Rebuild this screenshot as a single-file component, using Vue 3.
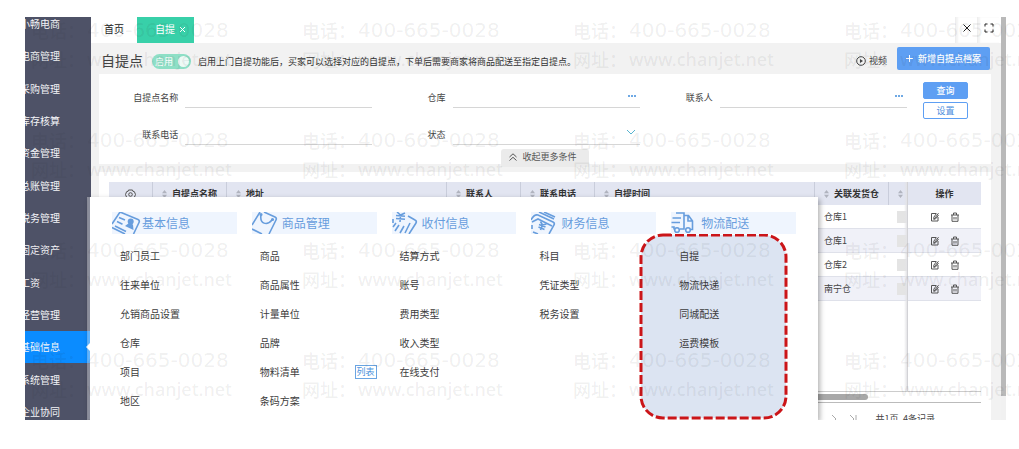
<script setup>
import { ref } from 'vue'

const modules = [
  '小畅电商', '电商管理', '采购管理', '库存核算', '资金管理', '总账管理', '税务管理',
  '固定资产', '工资', '经营管理', '基础信息', '系统管理', '企业协同',
]
const activeModule = ref('基础信息')
const enabled = ref(true)

const columns = ['自提点名称', '地址', '联系人', '联系电话', '自提时间', '关联发货仓', '']
const rows = ['仓库1', '仓库1', '仓库2', '南宁仓']

const groups = [
  { id: 'base', title: '基本信息', items: ['部门员工', '往来单位', '允销商品设置', '仓库', '项目', '地区'] },
  { id: 'goods', title: '商品管理', items: ['商品', '商品属性', '计量单位', '品牌', '物料清单', '条码方案'] },
  { id: 'pay', title: '收付信息', items: ['结算方式', '账号', '费用类型', '收入类型', '在线支付'] },
  { id: 'finance', title: '财务信息', items: ['科目', '凭证类型', '税务设置'] },
  { id: 'ship', title: '物流配送', items: ['自提', '物流快递', '同城配送', '运费模板'] },
]
</script>

<template>
  <div class="page">
    <div class="frame">
      <nav class="sidebar">
        <ul>
          <li v-for="m in modules" :key="m" :class="{ active: m === activeModule }">
            <a href="#" @click.prevent="activeModule = m">{{ m }}</a>
          </li>
        </ul>
      </nav>

      <main class="main">
        <div class="tabs">
          <button class="tab">首页</button>
          <button class="tab current">自提
            <svg width="7" height="7" viewBox="0 0 7 7"><path d="M1 1l5 5M6 1L1 6" /></svg>
          </button>
          <div class="window-tools">
            <button aria-label="关闭">
              <svg width="10" height="10" viewBox="0 0 10 10"><path d="M1.500 1.500l7 7M8.500 1.500l-7 7" /></svg>
            </button>
            <button aria-label="全屏">
              <svg width="10" height="10" viewBox="0 0 10 10"><path d="M1 3.500V1h2.500M6.500 1H9v2.500M9 6.500V9H6.500M3.500 9H1V6.500" /></svg>
            </button>
          </div>
        </div>

        <div class="body">
          <div class="content">
            <header class="head">
              <h1>自提点</h1>
              <label class="switch">
                <input v-model="enabled" type="checkbox" aria-label="启用自提点" />
                <span>启用</span><i></i>
              </label>
              <p>启用上门自提功能后，买家可以选择对应的自提点，下单后需要商家将商品配送至指定自提点。</p>
              <button class="video">
                <svg width="10" height="10" viewBox="0 0 10 10"><circle cx="5" cy="5" r="4.300" /><path d="M4 3l3 2-3 2z" /></svg>
                视频
              </button>
              <button class="add">
                <svg width="7" height="7" viewBox="0 0 7 7"><path d="M3.500 0v7M0 3.500h7" /></svg>
                新增自提点档案
              </button>
            </header>

            <section class="filter">
              <form class="fields" @submit.prevent>
                <div class="field">
                  <label for="f-name">自提点名称</label>
                  <div class="control"><input id="f-name" type="text" /></div>
                </div>
                <div class="field">
                  <label for="f-store">仓库</label>
                  <div class="control">
                    <input id="f-store" type="text" />
                    <button type="button" class="more" aria-label="选择仓库"><i></i><i></i><i></i></button>
                  </div>
                </div>
                <div class="field">
                  <label for="f-person">联系人</label>
                  <div class="control">
                    <input id="f-person" type="text" />
                    <button type="button" class="more" aria-label="选择联系人"><i></i><i></i><i></i></button>
                  </div>
                </div>
                <div class="field">
                  <label for="f-phone">联系电话</label>
                  <div class="control"><input id="f-phone" type="text" /></div>
                </div>
                <div class="field">
                  <label for="f-state">状态</label>
                  <div class="control">
                    <select id="f-state"><option value=""></option></select>
                    <svg width="10" height="6" viewBox="0 0 10 6"><path d="M1 1l4 4 4-4" /></svg>
                  </div>
                </div>
              </form>
              <div class="query">
                <button class="solid">查询</button>
                <button>设置</button>
              </div>
              <button class="collapse">
                <svg width="8" height="8" viewBox="0 0 8 8"><path d="M.5 4L4 .8 7.500 4M.5 7.500L4 4.300l3.500 3.200" /></svg>
                收起更多条件
              </button>
            </section>

            <section class="panel">
              <div class="grid">
                <table>
                  <colgroup>
                    <col class="c-set" /><col class="c-mid" /><col /><col class="c-mid" /><col class="c-mid" /><col />
                    <col class="c-mid" /><col class="c-thin" /><col class="c-act" />
                  </colgroup>
                  <thead>
                    <tr>
                      <th class="set">
                        <svg width="11" height="11" viewBox="0 0 11 11">
                          <path d="M3.500 1h4l.4 1.300 1.500.4L10.500 5.500 9.400 8.300l-1.500.4L7.500 10h-4l-.4-1.300-1.500-.4L.5 5.500l1.100-2.800 1.500-.4z" />
                          <circle cx="5.500" cy="5.500" r="1.800" />
                        </svg>
                      </th>
                      <th v-for="c in columns" :key="c">
                        <svg class="sort" width="5" height="8" viewBox="0 0 5 8"><path d="M0 3.200L2.500 0 5 3.200zM0 4.800L2.500 8 5 4.800z" /></svg>{{ c }}
                      </th>
                      <th class="act">操作</th>
                    </tr>
                  </thead>
                  <tbody>
                    <tr v-for="(r, i) in rows" :key="i">
                      <td></td><td></td><td></td><td></td><td></td><td></td>
                      <td class="store">{{ r }}</td>
                      <td class="thin"><span></span></td>
                      <td class="act">
                        <button aria-label="编辑">
                          <svg width="10" height="10" viewBox="0 0 10 10"><path d="M6 1.500H1.500v7.500h6.500V5M4 7.300L8.500 1.200M3.800 5.200L6.500 1.500M3.800 5.200V7.300l2-.6L8.500 3" /></svg>
                        </button>
                        <button aria-label="删除">
                          <svg width="10" height="10" viewBox="0 0 10 10"><path d="M1 3h8M3.500 3V1h3v2M2 3v6.300h6V3M4 5v2.500M6 5v2.500" /></svg>
                        </button>
                      </td>
                    </tr>
                  </tbody>
                </table>
              </div>
              <div class="hscroll"><span></span></div>
              <footer class="pager">
                <svg width="6" height="10" viewBox="0 0 6 10"><path d="M1 1l4 4-4 4" /></svg>
                <svg width="8" height="10" viewBox="0 0 8 10"><path d="M1 1l4 4-4 4M7 1v8" /></svg>
                <span>共1页, 4条记录</span>
              </footer>
            </section>
          </div>
        </div>
      </main>
      <div class="vscroll"><span></span></div>

      <div class="menu">
        <svg class="highlight"><rect x="2" y="2" rx="22" ry="22" /></svg>
        <section v-for="g in groups" :key="g.id" class="group">
          <h2>
            <svg width="29" height="22" viewBox="0 0 29 22">
              <g v-if="g.id === 'base'">
                <path d="M8 0L26 7.500q2 1 1 3L21.500 22M8 0L0 12M0 15.500L13 22" />
                <path d="M7 5.500l6 2.500M5 9.500l5.500 2.700M3 14l11 5.500" />
                <circle class="fill" cx="18.700" cy="9.500" r="3" />
                <path class="fill" d="M17 11l4 1.500.5 5.500-8.500-4z" />
              </g>
              <g v-else-if="g.id === 'goods'">
                <path d="M0 13L8 0M12 0l11 5q2 1 1 3L17 22M0 17l10 5M9 3c-1.500 9 6 11 11 5" />
                <circle cx="9" cy="2.500" r=".8" /><circle cx="20.500" cy="7.500" r=".8" />
              </g>
              <g v-else-if="g.id === 'pay'">
                <path d="M5 0l3.500 3L13 1M4 3.500l9 .8M4 6.500l9 .8M8.500 3L8 10" />
                <path d="M1 7v4M16 4l7 4q2 1 1 3L17 22M1 15l3-4M3 19l4-6M8 21l4-7M13 21l5-10" />
              </g>
              <g v-else-if="g.id === 'finance'">
                <path d="M0 8Q3 2 7 3l15 7q2 1 1 3L18 22M8 0l15 7M13 0l11 5M1 10l6-3 14 7M1 13v4M2 20l5 2" />
                <path d="M9.500 9.500l2 3.500 4-1M8 12.500l6.500 2.500M7.500 15l6 2.500M11.500 13l-2 5" />
              </g>
              <g v-else>
                <path d="M5 1h8v16H9M1.500 6H10M.5 10.500H9M.5 15H3v2.500M13 3.500h4.500l4 5.500v8.500H19.500M17 4v5h4" />
                <circle cx="6" cy="18" r="2.300" /><circle cx="17" cy="18" r="2.300" />
              </g>
            </svg>
            {{ g.title }}
          </h2>
          <ul>
            <li v-for="it in g.items" :key="it">
              <a href="#">{{ it }}</a>
              <a v-if="it === '物料清单'" href="#" class="tag">列表</a>
            </li>
          </ul>
        </section>
      </div>
    </div>

    <div class="watermark" aria-hidden="true">
      <div v-for="n in 16" :key="n" class="mark">
        <span>电话：</span><b>400-665-0028</b>
        <span>网址：</span><em>www.chanjet.net</em>
      </div>
    </div>
  </div>
</template>

<style>
body { background: #fff; }
</style>

<style scoped>
* { box-sizing: border-box; }
.page {
  position: relative;
  height: 100vh;
  padding: 17px 13px 29px 25px;
  overflow: hidden;
  font: 9px/12px "Noto Sans CJK SC", sans-serif;
  color: #444;
}
ul, h1, h2, p { margin: 0; padding: 0; list-style: none; font-weight: 400; }
a { color: inherit; text-decoration: none; }
button, input, select { font: inherit; color: inherit; border: 0; padding: 0; margin: 0; background: none; }
svg { fill: none; stroke: currentColor; flex: none; }
.frame { position: relative; display: flex; height: 100%; overflow: hidden; }

.sidebar { flex: none; width: 66px; overflow: hidden; background: #4e5267; }
.sidebar ul { display: grid; grid-auto-rows: 1fr; height: calc(100% + 17px); margin-top: -9px; }
.sidebar li { position: relative; display: flex; align-items: center; font-size: 10px; color: #f4f5f8; }
.sidebar a { margin-left: -5px; white-space: nowrap; }
.sidebar .active { background: #0b8cff; }
.sidebar .active::after {
  content: ""; position: absolute; right: 1px; top: 50%; margin-top: -4px;
  border: 4px solid transparent; border-right-color: #fff; border-left: 0;
}

.main { flex: 1; min-width: 0; display: flex; flex-direction: column; background: #f2f2f2; }
.tabs { flex: none; display: flex; height: 26px; background: #fff; font-size: 10px; color: #222; }
.tab { width: 46px; padding-bottom: 2px; }
.tab.current { display: flex; align-items: center; justify-content: flex-end; gap: 4px; width: 57px; padding-right: 8px; background: #38d0a9; color: #fff; }
.window-tools { display: flex; margin-left: auto; padding-right: 2px; }
.window-tools button { display: flex; align-items: center; justify-content: center; width: 22px; padding-bottom: 4px; border-left: 1px solid #eee; box-shadow: inset 2px 0 2px #f3f3f3; }

.body { flex: 1; min-height: 0; padding: 0 10px 0 8px; }
.content { display: flex; flex-direction: column; height: 100%; }
.head { flex: none; display: flex; align-items: center; height: 31px; padding: 0 1px 0 2px; }
.head h1 { font-size: 14px; line-height: 20px; color: #444; padding-top: 2px; }
.switch { position: relative; display: flex; align-items: center; justify-content: space-between; width: 39px; height: 15px; margin: 6px 7px 0 9px; padding: 0 2px 0 3px; border-radius: 8px; background: #8edfc6; color: #fff; }
.switch input { position: absolute; inset: 0; margin: 0; opacity: 0; }
.switch i { width: 11px; height: 11px; border-radius: 50%; background: #eefaf6; }
.head p { margin-top: 6px; white-space: nowrap; color: #333; }
.video { display: flex; align-items: center; gap: 3px; margin: 4px 10px 0 auto; }
.video path { fill: currentColor; stroke: none; }
.add { display: flex; align-items: center; justify-content: center; gap: 5px; width: 93px; height: 23px; border-radius: 2px; background: #5e9ff3; color: #fff; font-weight: 500; }

.filter { position: relative; flex: none; display: flex; padding: 8px 23px 19px 6px; background: #fff; }
.fields { flex: 1; display: grid; grid-template-columns: repeat(3, 1fr); gap: 15px 0; margin-top: 4px; }
.field { display: flex; justify-content: flex-end; gap: 7px; height: 22px; }
.field label { align-self: center; white-space: nowrap; color: #444; padding-top: 2px; }
.control { display: flex; align-items: center; width: 70%; border-bottom: 1px solid #d6d6d6; }
.control input, .control select { flex: 1; min-width: 0; height: 18px; appearance: none; outline: 0; }
.more { display: flex; gap: 1px; margin: 0 4px 2px 0; }
.more i { width: 2px; height: 2px; background: #6fa9e4; }
.control svg { margin: 0 4px 4px 0; color: #58b4d0; }
.query { display: flex; flex-direction: column; gap: 3px; width: 45px; margin-left: 16px; }
.query button { height: 17px; border: 1px solid #5e9ff3; border-radius: 2px; color: #4c8ddd; line-height: 14px; }
.query .solid { background: #5e9ff3; color: #fff; font-weight: 500; }
.collapse { position: absolute; left: 50%; top: 75px; display: flex; align-items: center; justify-content: center; gap: 5px; width: 88px; height: 18px; margin-left: -44px; padding: 0 4px 2px 0; border-radius: 3px 3px 0 0; background: #ebebeb; color: #555; }

.panel { flex: 1; min-height: 0; display: flex; flex-direction: column; margin-top: 8px; padding: 10px 10px 0; background: #fff; }
.grid { position: relative; flex: 1; min-height: 0; border-bottom: 1px solid #ccc; }
.grid::after { content: ""; position: absolute; top: 0; bottom: 0; right: 73px; width: 3px; border-right: 1px solid #d2d2d6; background: linear-gradient(to right, transparent, #e3e3e6); }
table { width: 100%; border-collapse: separate; border-spacing: 0; table-layout: fixed; }
.c-set { width: 43px; }
.c-mid { width: 74px; }
.c-thin { width: 20px; }
.c-act { width: 73px; }
th { height: 23px; padding: 0 0 0 9px; border-left: 1px solid #c9cddb; background: #e2e5f1; text-align: left; font-weight: 700; color: #333; white-space: nowrap; overflow: hidden; }
th.set { padding: 0; border: 0; text-align: center; color: #555; }
th.set svg, .sort { vertical-align: middle; }
.sort { margin-right: 5px; stroke: none; fill: #b0b3be; }
th.act, td.act { padding: 0; border-left: 0; text-align: center; }
td { height: 24px; padding: 0; border-bottom: 1px solid #dfe1ea; }
tbody tr:nth-child(even) td { background: #f0f1f8; }
td.store { padding-left: 10px; }
td.thin span { display: block; width: 10px; height: 12px; margin-left: 9px; background: #e4e4e4; }
td.act button { margin: 0 5px; color: #555; vertical-align: middle; }
td.act svg { display: block; }
.hscroll { flex: none; height: 11px; padding: 2px 0; border-bottom: 1px solid #bbb; }
.hscroll span { display: block; width: 87%; height: 6px; border-radius: 3px; background: #a8a8a8; }
.pager { flex: none; display: flex; align-items: center; justify-content: flex-end; gap: 12px; height: 29px; margin-bottom: -12px; padding: 2px 46px 0 0; color: #444; }
.pager svg { color: #aaa; }
.pager span { margin-left: 6px; }
.vscroll { flex: none; width: 5px; background: #f1f1f1; }
.vscroll span { display: block; height: 94%; background: #b9b9b9; }

.menu {
  position: absolute; left: 62px; top: 180px; right: 188px; bottom: 0;
  display: grid; grid-template-columns: repeat(5, 1fr); gap: 15px;
  padding: 15px 22px 0 22px; align-items: start;
  border-left: 3px solid rgba(255, 255, 255, .35); background: #fff; background-clip: padding-box;
  box-shadow: 2px 2px 5px rgba(0, 0, 0, .3);
}
.group { position: relative; }
.group h2 { display: flex; align-items: center; gap: 1px; height: 22px; background: #eff5fe; color: #679ddd; font-size: 12px; line-height: 20px; }
.group h2 svg { stroke-width: 1.600; }
.group .fill { fill: currentColor; stroke: none; }
.group ul { padding: 7px 0 0 8px; }
.group li { display: flex; align-items: center; justify-content: space-between; height: 29px; font-size: 10px; color: #3c3c3c; white-space: nowrap; }
.group .tag { padding: 0 1px; border: 1px solid #6aa5e2; color: #4c93dc; font-size: 9px; }
.highlight { position: absolute; right: 30px; top: 36px; width: 149px; height: calc(100% - 36px); }
.highlight rect { width: calc(100% - 4px); height: calc(100% - 4px); fill: #dce4f2; stroke: #cb1519; stroke-width: 3; stroke-dasharray: 9 3; }

.watermark {
  position: absolute; left: 31px; top: 16px; right: 0; bottom: 0; overflow: hidden;
  display: grid; grid-template-columns: repeat(4, 271px); grid-auto-rows: 110px;
  pointer-events: none; color: rgba(40, 40, 40, .08); font-size: 18px;
}
.mark { display: grid; grid-template-columns: 56px auto; grid-auto-rows: 29px; align-items: center; justify-content: start; line-height: 29px; white-space: nowrap; font-weight: 500; }
.mark b { font: 20px/29px "DejaVu Sans", sans-serif; }
.mark em { font: 500 18px/29px "Noto Sans", sans-serif; }
</style>
